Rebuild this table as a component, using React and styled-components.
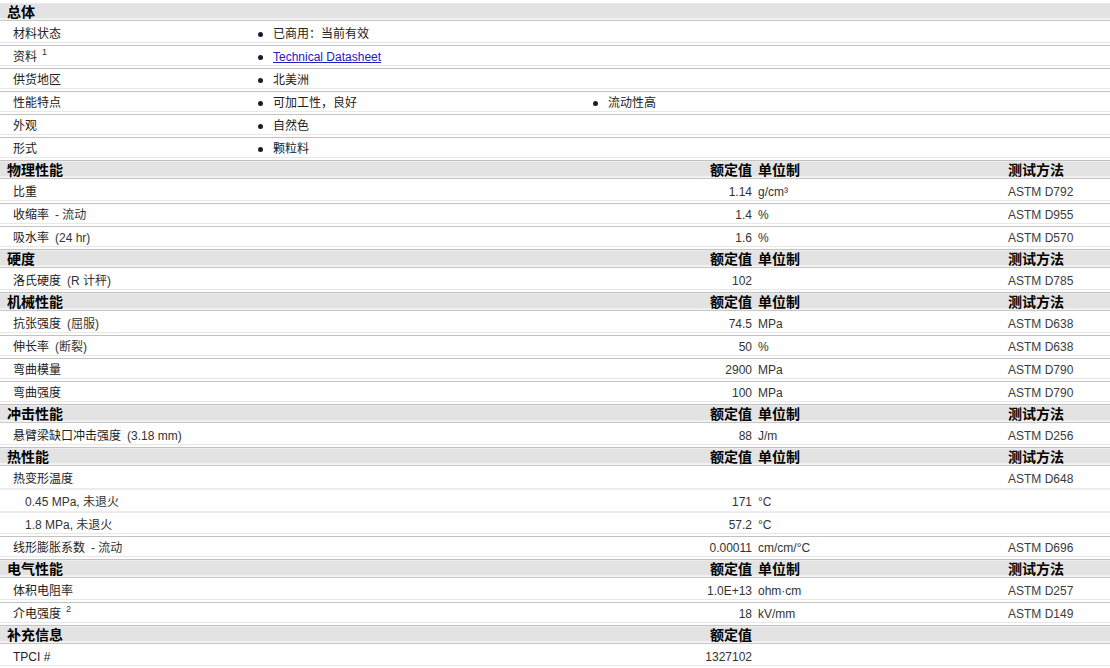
import React from 'react'
import styled, { createGlobalStyle } from 'styled-components'

const GlobalStyle = createGlobalStyle`
  html, body {
    margin: 0;
    padding: 0;
    background: #fff;
  }
  body {
    font-family: "Liberation Sans", Arial, "Noto Sans CJK SC", sans-serif;
    font-size: 12px;
    color: #222;
  }
`

const cols = '652px 100px 250px 1fr'

const Sheet = styled.div`
  padding-top: 3px;
`

const HeadRow = styled.div`
  display: grid;
  grid-template-columns: ${cols};
  height: 20px;
  line-height: 17px;
  font-family: "Noto Sans CJK SC", "Liberation Sans", sans-serif;
  font-size: 14px;
  font-weight: bold;
  color: #000;
  background: linear-gradient(
    to bottom,
    #ebebeb 0 1px,
    #e3e3e3 1px 15px,
    #f1f1f1 15px 17px,
    #c9c9c9 17px 18px,
    #fff 18px
  );
`

const HeadTitle = styled.div`
  padding-left: 7px;
`

const HeadValue = styled.div`
  text-align: right;
`

const HeadCell = styled.div`
  padding-left: 6px;
`

const lines = {
  full: `linear-gradient(to bottom, #fff 0 19px, #e8e8e8 19px 20px, #fff 20px 22px, #c2c2c2 22px 23px)`,
  light: `linear-gradient(to bottom, #fff 0 20px, #ececec 20px 22px, #fff 22px 23px)`,
}

const Row = styled.div`
  display: grid;
  grid-template-columns: ${(p) => (p.$general ? '255px 335px 1fr' : cols)};
  height: 23px;
  line-height: 23px;
  background: ${(p) => lines[p.$sep || 'full']};
`

const Label = styled.div`
  padding-left: ${(p) => (p.$sub ? 25 : 13)}px;
  color: ${(p) => (p.$sub ? '#333' : '#222')};
  white-space: nowrap;
`

const Note = styled.span`
  margin-left: 6px;
  color: #333;
`

const Sup = styled.sup`
  font-size: 9px;
  line-height: 0;
  margin-left: 5px;
  vertical-align: 6px;
  color: #333;
`

const Value = styled.div`
  text-align: right;
  color: #333;
`

const Unit = styled.div`
  padding-left: 6px;
  color: #333;
`

const Method = styled.div`
  padding-left: 6px;
  color: #3c3c3c;
`

const Item = styled.div`
  display: flex;
  align-items: center;
  gap: 10px;
  padding-left: 3px;
  color: #222;
`

const Dot = styled.span`
  width: 5px;
  height: 5px;
  border-radius: 50%;
  background: #1a1a30;
  flex: none;
`

const Link = styled.a`
  color: #2020c0;
  text-decoration: underline;
  cursor: pointer;
`

const general = [
  { label: '材料状态', items: ['已商用：当前有效'] },
  { label: '资料', sup: '1', items: [{ link: 'Technical Datasheet' }] },
  { label: '供货地区', items: ['北美洲'] },
  { label: '性能特点', items: ['可加工性，良好', '流动性高'] },
  { label: '外观', items: ['自然色'] },
  { label: '形式', items: ['颗粒料'] },
]

const sections = [
  {
    title: '物理性能',
    rows: [
      { label: '比重', value: '1.14', unit: 'g/cm³', method: 'ASTM D792' },
      { label: '收缩率', note: '- 流动', value: '1.4', unit: '%', method: 'ASTM D955' },
      { label: '吸水率', note: '(24 hr)', value: '1.6', unit: '%', method: 'ASTM D570' },
    ],
  },
  {
    title: '硬度',
    rows: [{ label: '洛氏硬度', note: '(R 计秤)', value: '102', unit: '', method: 'ASTM D785' }],
  },
  {
    title: '机械性能',
    rows: [
      { label: '抗张强度', note: '(屈服)', value: '74.5', unit: 'MPa', method: 'ASTM D638' },
      { label: '伸长率', note: '(断裂)', value: '50', unit: '%', method: 'ASTM D638' },
      { label: '弯曲模量', value: '2900', unit: 'MPa', method: 'ASTM D790' },
      { label: '弯曲强度', value: '100', unit: 'MPa', method: 'ASTM D790' },
    ],
  },
  {
    title: '冲击性能',
    rows: [{ label: '悬臂梁缺口冲击强度', note: '(3.18 mm)', value: '88', unit: 'J/m', method: 'ASTM D256' }],
  },
  {
    title: '热性能',
    rows: [
      { label: '热变形温度', value: '', unit: '', method: 'ASTM D648', sep: 'light' },
      { label: '0.45 MPa, 未退火', sub: true, value: '171', unit: '°C', method: '', sep: 'light' },
      { label: '1.8 MPa, 未退火', sub: true, value: '57.2', unit: '°C', method: '' },
      { label: '线形膨胀系数', note: '- 流动', value: '0.00011', unit: 'cm/cm/°C', method: 'ASTM D696' },
    ],
  },
  {
    title: '电气性能',
    rows: [
      { label: '体积电阻率', value: '1.0E+13', unit: 'ohm·cm', method: 'ASTM D257' },
      { label: '介电强度', sup: '2', value: '18', unit: 'kV/mm', method: 'ASTM D149' },
    ],
  },
  {
    title: '补充信息',
    short: true,
    rows: [{ label: 'TPCI #', value: '1327102', unit: '', method: '' }],
  },
]

const Header = ({ title, short }) => (
  <HeadRow>
    <HeadTitle>{title}</HeadTitle>
    <HeadValue>额定值</HeadValue>
    <HeadCell>{short ? '' : '单位制'}</HeadCell>
    <HeadCell>{short ? '' : '测试方法'}</HeadCell>
  </HeadRow>
)

export default function App() {
  return (
    <>
      <GlobalStyle />
      <Sheet>
        <HeadRow>
          <HeadTitle>总体</HeadTitle>
        </HeadRow>
        {general.map((g) => (
          <Row $general key={g.label}>
            <Label>
              {g.label}
              {g.sup && <Sup>{g.sup}</Sup>}
            </Label>
            {g.items.map((it, i) => (
              <Item key={i}>
                <Dot />
                {typeof it === 'string' ? it : <Link>{it.link}</Link>}
              </Item>
            ))}
          </Row>
        ))}

        {sections.map((s) => (
          <React.Fragment key={s.title}>
            <Header title={s.title} short={s.short} />
            {s.rows.map((r) => (
              <Row key={r.label} $sep={r.sep}>
                <Label $sub={r.sub}>
                  {r.label}
                  {r.note && <Note>{r.note}</Note>}
                  {r.sup && <Sup>{r.sup}</Sup>}
                </Label>
                <Value>{r.value}</Value>
                <Unit>{r.unit}</Unit>
                <Method>{r.method}</Method>
              </Row>
            ))}
          </React.Fragment>
        ))}
      </Sheet>
    </>
  )
}
